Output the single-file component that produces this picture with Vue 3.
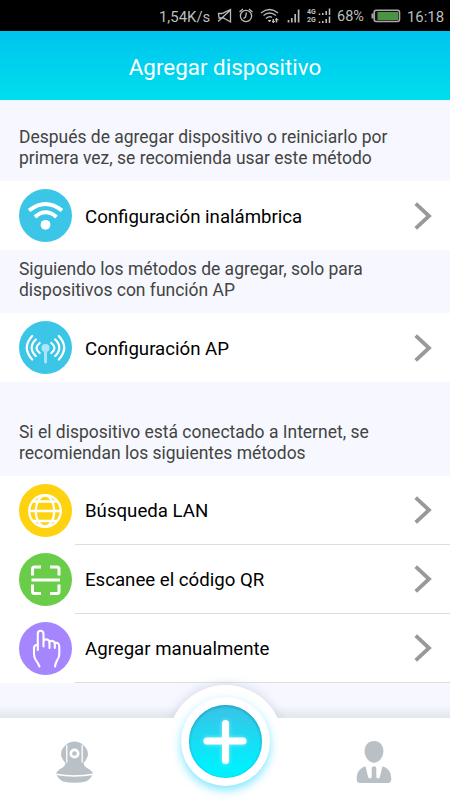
<template>
  <div class="screen">
    <div class="status">
      <span class="speed">1,54K/s</span>
      <svg class="status-icons" width="88" height="31" viewBox="0 0 88 31" fill="none" stroke="#b9b9b9" stroke-width="1.3">
        <!-- mute -->
        <path d="M3.500 13.500H7L15.500 9.500V22L8.500 18H4Z M3 21.500L16 9.500" />
        <!-- alarm -->
        <circle cx="31" cy="16" r="5.600" />
        <path d="M31.500 12.500L30.500 17L28.500 18.500 M24.500 12L28 9 M34 9L37.500 12" />
        <!-- wifi -->
        <path d="M46 13Q54.500 6 63 13 M48.500 15.500Q54.500 10.500 61 15.500 M51 18.500Q54.500 15.500 57 17.500" />
        <path d="M54.500 20V22 M58.300 19V23 M61.500 18V22.500" stroke-width="1.500" />
        <path d="M53 20.500H56 M57 21.500H60 M60 19.800H63.500" stroke-width="1" />
        <!-- signal -->
        <path d="M73.500 20V22.500 M76.800 18V22.500 M80.200 14V22.500 M83.600 9.500V22.500" stroke-width="1.700" />
      </svg>
      <div class="sims">
        <div v-for="net in ['4G', '2G']" :key="net" class="sim">
          <span>{{ net }}</span>
          <svg width="13" height="8" viewBox="0 0 13 8" stroke="#c4c4c4" stroke-width="1.500">
            <path d="M1.500 5.500V7 M4.800 5V7 M8.200 3V7 M11.500 0.500V7" />
          </svg>
        </div>
      </div>
      <span class="percent">68%</span>
      <svg class="battery" width="30" height="14" viewBox="0 0 30 14">
        <rect x="3.200" y="1.200" width="25.300" height="11.300" rx="2" fill="#111" stroke="#a9a9a9" stroke-width="1.600" />
        <path d="M1.500 4.500V9.500" stroke="#a9a9a9" stroke-width="2" />
        <rect x="6.500" y="3" width="20.500" height="8" fill="#4b9443" />
      </svg>
      <span class="clock">16:18</span>
    </div>

    <header class="header">Agregar dispositivo</header>

    <main class="content">
      <section v-for="group in groups" :key="group.id" :class="['group', group.id]">
        <p class="hint">
          <span v-for="line in group.hint" :key="line">{{ line }}</span>
        </p>
        <div class="rows">
          <div v-for="item in group.items" :key="item.icon" class="row">
            <div class="icon" :class="item.icon">
              <svg v-if="item.icon === 'wifi'" width="53" height="53" viewBox="0 0 53 53" fill="none" stroke="#fff" stroke-width="4">
                <path d="M10 21.500Q26.500 8.500 43 21.500" />
                <path d="M16 28Q26.500 18.500 37.500 28" />
                <circle cx="26.500" cy="35.800" r="4.900" fill="#fff" stroke="none" />
              </svg>
              <svg v-else-if="item.icon === 'ap'" width="53" height="53" viewBox="0 0 53 53" fill="none" stroke="#fff" stroke-width="2.200" stroke-linecap="round">
                <path d="M13.200 15Q2.400 26.500 13.200 38.500 M39.800 15Q50.600 26.500 39.800 38.500" />
                <path d="M16.800 18.500Q8.500 26.500 16.800 35 M36.200 18.500Q44.500 26.500 36.200 35" />
                <path d="M20.700 22Q14.300 27 20.700 32 M32.300 22Q38.700 27 32.300 32" />
                <circle cx="26.500" cy="27" r="4" fill="#aee5fa" stroke="none" />
                <path d="M26.500 28V41" stroke="#aee5fa" stroke-width="2.900" />
              </svg>
              <svg v-else-if="item.icon === 'lan'" width="53" height="53" viewBox="0 0 53 53" fill="none" stroke="#fff" stroke-width="2.300">
                <circle cx="26" cy="27" r="15.800" />
                <ellipse cx="26" cy="27" rx="9.200" ry="15.500" />
                <path d="M10 27H42 M14 17.500H38 M14 37H38" />
              </svg>
              <svg v-else-if="item.icon === 'qr'" width="53" height="53" viewBox="0 0 53 53" fill="none" stroke="#fff" stroke-width="3">
                <path d="M13.500 22.500V16Q13.500 14 15.500 14H22 M31 14H38Q40 14 40 16V22.500 M13.500 31.500V38.500Q13.500 40.500 15.500 40.500H22 M31 40.500H38Q40 40.500 40 38.500V31.500" />
                <path d="M12.500 27H41" />
              </svg>
              <svg v-else width="53" height="53" viewBox="0 0 53 53" fill="none" stroke="#fff" stroke-width="2.100" stroke-linecap="round" stroke-linejoin="round">
                <path d="M20.500 44.500Q19 41 16.500 37.500Q15 35 15 32V25.500Q15 23.500 18.800 22.500" />
                <path d="M18.800 28V11.500Q19 8.700 21.500 8.700Q24.200 8.700 24.500 11.500V24.500 M24.500 19Q25.500 17 28 17.500Q30.500 18 30.500 21V26 M30.500 20Q31.500 18.500 33.500 19Q35.800 19.500 35.800 22V26 M35.800 21Q40.300 20 40.300 25V32Q40.300 35 38.500 37.500Q36.500 41 36 44.500" />
              </svg>
            </div>
            <div class="label">
              <span>{{ item.text }}</span>
              <svg width="20" height="30" viewBox="0 0 20 30" fill="none" stroke="#999" stroke-width="3.800">
                <path d="M2.700 2.700L16 15L2.700 27.300" />
              </svg>
            </div>
          </div>
        </div>
      </section>
    </main>

    <div class="shade"></div>
    <nav class="tabs">
      <svg class="tab" width="40" height="44" viewBox="0 0 40 44" fill="#b9c0c6">
        <path d="M12.500 3.500Q16 1.500 19.500 1.500Q23 1.500 26.500 3.500Q33 8.500 33 14Q33 18 28.500 23Q29 26.500 33 28.500Q37.500 31 38 34Q30 36 19.500 36Q9 36 1 34Q1.500 31 6 28.500Q10 26.500 10.500 23Q6 18 6 14Q6 8.500 12.500 3.500Z" />
        <path d="M11.800 5V22.500 M27.200 5V22.500" stroke="#fff" stroke-width="1.300" />
        <circle cx="19.500" cy="13.500" r="3.700" fill="#b9c0c6" stroke="#fff" stroke-width="2.700" />
        <path d="M1 34Q19.500 38 38 34Q36 38.500 31 41.500Q19.500 44 8 41.500Q3 38.500 1 34Z" />
        <path d="M0.500 34.300Q19.500 37.500 38.500 34.300" fill="none" stroke="#fff" stroke-width="1.500" />
      </svg>
      <svg class="tab" width="40" height="44" viewBox="0 0 40 44" fill="#b9c0c6">
        <path d="M20 1C14 1 10.600 5.500 10.600 11C10.600 17.500 15 22.800 20 22.800C25 22.800 29.400 17.500 29.400 11C29.400 5.500 26 1 20 1Z" />
        <path d="M11.500 26.300C6 28 2.700 32 2.700 39Q2.700 43 6 43H34Q37.300 43 37.300 39C37.300 32 34 28 28.500 26.300L26 36.500Q25.500 38.600 24 38.600Q22.300 38.600 22.300 36.500V28.500Q22.300 26.300 20 26.300Q17.700 26.300 17.700 28.500V36.500Q17.700 38.600 16 38.600Q14.500 38.600 14 36.500Z" />
      </svg>
    </nav>
    <div class="bump"></div>
    <div class="cover"></div>
    <div class="add">
      <div class="add-inner">
        <svg width="73" height="73" viewBox="0 0 73 73" fill="none" stroke="#fff" stroke-width="7" stroke-linecap="round">
          <path d="M36.500 18.500V55.500 M18 36H54" />
        </svg>
      </div>
    </div>
  </div>
</template>

<script setup>
const groups = [
  {
    id: 'first',
    hint: ['Después de agregar dispositivo o reiniciarlo por', 'primera vez, se recomienda usar este método'],
    items: [{ icon: 'wifi', text: 'Configuración inalámbrica' }],
  },
  {
    id: 'second',
    hint: ['Siguiendo los métodos de agregar, solo para', 'dispositivos con función AP'],
    items: [{ icon: 'ap', text: 'Configuración AP' }],
  },
  {
    id: 'third',
    hint: ['Si el dispositivo está conectado a Internet, se', 'recomiendan los siguientes métodos'],
    items: [
      { icon: 'lan', text: 'Búsqueda LAN' },
      { icon: 'qr', text: 'Escanee el código QR' },
      { icon: 'manual', text: 'Agregar manualmente' },
    ],
  },
];
</script>

<style>
body {
  margin: 0;
}
</style>

<style scoped>
.screen {
  position: relative;
  display: flex;
  flex-direction: column;
  width: 450px;
  height: 800px;
  overflow: hidden;
  background: #f6f7ff;
  font-family: Roboto, sans-serif;
  color: #000;
}

.status {
  display: flex;
  align-items: center;
  flex: 0 0 31px;
  box-sizing: border-box;
  padding-left: 159px;
  background: #000;
  color: #bdbdbd;
  font-size: 14.900px;
  white-space: nowrap;
}

.speed {
  width: 56px;
  padding-top: 2px;
}

.sims {
  width: 27px;
  margin-left: 4px;
}

.sim {
  display: flex;
  align-items: center;
  gap: 2px;
  height: 8px;
  font-size: 7px;
  font-weight: 700;
  line-height: 8px;
}

.percent {
  width: 30px;
  margin-left: 3px;
  padding-top: 2px;
  font-size: 14.500px;
}

.battery {
  margin-left: 4px;
}

.clock {
  margin-left: 6px;
  padding-top: 2px;
}

.header {
  flex: 0 0 69px;
  box-sizing: border-box;
  padding-top: 4px;
  background: linear-gradient(#00c4ee, #00deed);
  color: #fff;
  font-size: 22.400px;
  line-height: 64px;
  text-align: center;
}

.hint {
  display: flex;
  flex-direction: column;
  justify-content: flex-end;
  box-sizing: border-box;
  height: 81px;
  margin: 0;
  padding: 0 19px 12.600px;
  color: #43443f;
  font-size: 17.480px;
  line-height: 20.500px;
  white-space: nowrap;
}

.second .hint {
  height: 63px;
}

.third .hint {
  height: 94px;
}

.rows {
  background: #fff;
}

.row {
  display: flex;
  align-items: center;
  height: 69px;
  padding-left: 19px;
}

.icon {
  width: 53px;
  height: 53px;
  border-radius: 50%;
  background: #3bc6e8;
}

.icon svg {
  display: block;
}

.lan {
  background: #ffd20f;
}

.qr {
  background: #6acd49;
}

.manual {
  background: #a586ff;
}

.label {
  display: flex;
  flex: 1;
  align-items: center;
  justify-content: space-between;
  box-sizing: border-box;
  height: 69px;
  margin-left: 3px;
  padding: 0 17px 0 10px;
  font-size: 18.650px;
}

.label span {
  padding-top: 2px;
}

.third .label {
  border-bottom: 1px solid #dedee0;
}

.shade {
  height: 12px;
  margin-top: auto;
  background: linear-gradient(#f6f7ff, #e8ecf3 60%, #e4e7ed);
}

.tabs {
  display: flex;
  justify-content: space-between;
  flex: 0 0 82px;
  box-sizing: border-box;
  padding: 22px 56px 0 55px;
  background: #fff;
}

/* raised disc behind the add button */
.bump {
  position: absolute;
  top: 685px;
  left: 167.500px;
  width: 115px;
  height: 115px;
  border-radius: 50%;
  background: #fff;
  box-shadow: 0 0 9px 2px rgba(200, 206, 222, 0.6);
}

.cover {
  position: absolute;
  top: 718px;
  left: 140px;
  width: 170px;
  height: 82px;
  background: #fff;
}

.add {
  position: absolute;
  top: 697px;
  left: 180.500px;
  display: flex;
  align-items: center;
  justify-content: center;
  width: 89px;
  height: 89px;
  border-radius: 50%;
  background: #fff;
  box-shadow: 0 4px 10px rgba(0, 205, 255, 0.5);
}

.add-inner {
  width: 73px;
  height: 73px;
  border-radius: 50%;
  background: linear-gradient(#3bc2e5, #00f0ff 85%);
  box-shadow: inset 0 1px 3px #159bbb;
}

.add-inner svg {
  display: block;
  filter: drop-shadow(0 0 2px rgba(255, 255, 255, 0.5));
}
</style>
